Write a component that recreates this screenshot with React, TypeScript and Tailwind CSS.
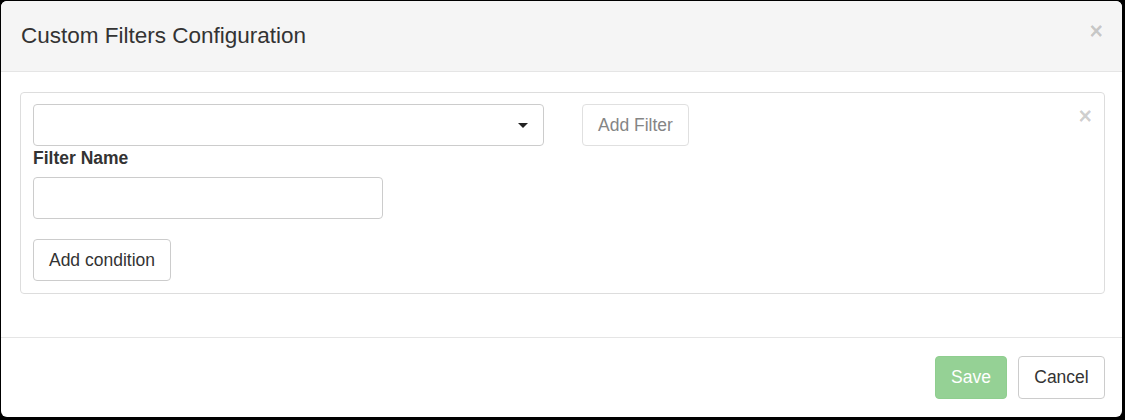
import React from "react";

export default function App() {
  return (
    <div
      className="w-[1125px] h-[420px] bg-black pt-[1px] pl-[1px] pr-[3px] pb-[3px] overflow-hidden"
      style={{ fontFamily: '"Liberation Sans", Arial, sans-serif' }}
    >
      <div className="w-[1121px] h-[416px] bg-white rounded-[6px] overflow-hidden flex flex-col text-[#333]">
        {/* Header */}
        <div className="h-[71px] shrink-0 bg-[#f5f5f5] border-b border-[#e5e5e5] flex justify-between items-center pl-[20px] pr-[19px]">
          <h4 className="text-[22.5px] leading-[1.1] font-normal text-[#333]">
            Custom Filters Configuration
          </h4>
          <button className="self-start mt-[19px] text-[23px] leading-[23px] font-bold text-black/20">
            ×
          </button>
        </div>

        {/* Body */}
        <div className="pt-[20px] pb-[43px] pl-[19px] pr-[17px]">
          <div className="border border-[#dddddd] rounded-[4px] px-[12px] pt-[11px] pb-[12px]">
            <div className="flex items-start">
              <div className="w-[511px] h-[42px] border border-[#cccccc] rounded-[4px] flex items-center justify-end pr-[15px]">
                <svg width="10" height="5" viewBox="0 0 10 5">
                  <path d="M0 0 L10 0 L5 5 Z" fill="#222" />
                </svg>
              </div>
              <button className="ml-[38px] w-[107px] h-[42px] border border-[#e0e0e0] rounded-[4px] text-[17.5px] text-[#858585] flex items-center justify-center">
                Add Filter
              </button>
              <div className="flex-1" />
              <button className="mt-[1px] mr-[0px] text-[23px] leading-[23px] font-bold text-black/20">
                ×
              </button>
            </div>
            <label className="block mt-[1px] mb-[8px] text-[17.5px] leading-[22px] font-bold text-[#333]">
              Filter Name
            </label>
            <div className="w-[350px] h-[42px] border border-[#cccccc] rounded-[4px]" />
            <button className="mt-[20px] w-[138px] h-[42px] border border-[#cccccc] rounded-[4px] text-[17.5px] text-[#333] flex items-center justify-center">
              Add condition
            </button>
          </div>
        </div>

        {/* Footer */}
        <div className="flex-1 border-t border-[#e5e5e5] flex items-center justify-end gap-[11px] pr-[17px]">
          <button className="w-[72px] h-[43px] rounded-[4px] bg-[#95d195] border border-[#8fce8f] text-white text-[17.5px] flex items-center justify-center">
            Save
          </button>
          <button className="w-[87px] h-[43px] rounded-[4px] bg-white border border-[#cccccc] text-[#333] text-[17.5px] flex items-center justify-center">
            Cancel
          </button>
        </div>
      </div>
    </div>
  );
}
